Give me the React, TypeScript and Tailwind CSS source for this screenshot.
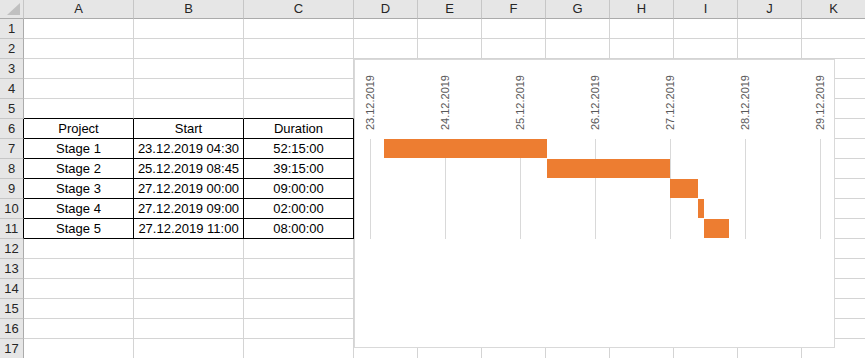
import React from "react";

const COLS = ["A", "B", "C", "D", "E", "F", "G", "H", "I", "J", "K"];
const ROWS = Array.from({ length: 17 }, (_, i) => i + 1);

const TABLE: Record<number, string[]> = {
  6: ["Project", "Start", "Duration"],
  7: ["Stage 1", "23.12.2019 04:30", "52:15:00"],
  8: ["Stage 2", "25.12.2019 08:45", "39:15:00"],
  9: ["Stage 3", "27.12.2019 00:00", "09:00:00"],
  10: ["Stage 4", "27.12.2019 09:00", "02:00:00"],
  11: ["Stage 5", "27.12.2019 11:00", "08:00:00"],
};

const DAYS = ["23.12.2019", "24.12.2019", "25.12.2019", "26.12.2019", "27.12.2019", "28.12.2019", "29.12.2019"];

// hours from 23.12.2019 00:00
const BARS = [
  { start: 4.5, dur: 52.25 },
  { start: 56.75, dur: 39.25 },
  { start: 96, dur: 9 },
  { start: 105, dur: 2 },
  { start: 107, dur: 8 },
];
const PX_PER_HOUR = 75 / 24;

function cellClass(r: number, c: number) {
  const inTable = r >= 6 && r <= 11 && c <= 2;
  if (inTable) return "border-r border-b border-black";
  if (r === 5 && c <= 2) return "border-r border-b border-r-[#d4d4d4] border-b-black";
  return "border-r border-b border-[#d4d4d4]";
}

const GanttChart: React.FC = () => (
  <div className="absolute left-[354px] top-[59px] h-[289px] w-[481px] border border-[#d9d9d9] bg-white pl-[15px] pt-[15px]">
    <div className="flex h-[55px] w-[451px] items-end justify-between">
      {DAYS.map((d) => (
        <div key={d} className="flex w-px justify-center">
          <span className="rotate-180 text-[11px] leading-[13px] text-[#595959] [writing-mode:vertical-rl]">
            {d}
          </span>
        </div>
      ))}
    </div>
    <div className="relative mt-[9px] h-[100px] w-[451px]">
      <div className="flex h-full justify-between">
        {DAYS.map((d) => (
          <div key={d} className="h-full w-px bg-[#d9d9d9]" />
        ))}
      </div>
      <div className="absolute inset-0 flex flex-col">
        {BARS.map((b, i) => (
          <div key={i} className="h-[20px]">
            <div
              className="h-[19px] bg-[#ed7d31]"
              style={{ marginLeft: b.start * PX_PER_HOUR, width: b.dur * PX_PER_HOUR }}
            />
          </div>
        ))}
      </div>
    </div>
  </div>
);

const App: React.FC = () => {
  return (
    <div
      className="relative h-[358px] w-[865px] overflow-hidden bg-white text-[13px] text-black"
      style={{ fontFamily: '"Liberation Sans", Arial, sans-serif' }}
    >
      <div className="grid grid-cols-[24px_110px_110px_110px_repeat(8,64px)] grid-rows-[19px_repeat(17,20px)]">
        <div className="relative border-r border-b border-r-[#c6c6c6] border-b-[#ababab] bg-[#e6e6e6]">
          <svg className="absolute right-[3px] bottom-[3px]" width="13" height="12" viewBox="0 0 13 12">
            <polygon points="13,0 13,12 0,12" fill="#c0c0c0" />
          </svg>
        </div>
        {COLS.map((c) => (
          <div
            key={c}
            className="flex items-center justify-center border-r border-b border-r-[#c6c6c6] border-b-[#ababab] bg-[#e6e6e6] text-[#262626]"
          >
            {c}
          </div>
        ))}
        {ROWS.map((r) => (
          <React.Fragment key={r}>
            <div
              className={
                r >= 6 && r <= 11
                  ? "flex items-center justify-center border-r border-b border-r-black border-b-[#c6c6c6] bg-[#e6e6e6] text-[#262626]"
                  : "flex items-center justify-center border-r border-b border-r-[#ababab] border-b-[#c6c6c6] bg-[#e6e6e6] text-[#262626]"
              }
            >
              {r}
            </div>
            {COLS.map((c, ci) => (
              <div key={c} className={`flex items-center justify-center ${cellClass(r, ci)}`}>
                {TABLE[r] && ci <= 2 ? TABLE[r][ci] : null}
              </div>
            ))}
          </React.Fragment>
        ))}
      </div>
      <GanttChart />
    </div>
  );
};

export default App;
